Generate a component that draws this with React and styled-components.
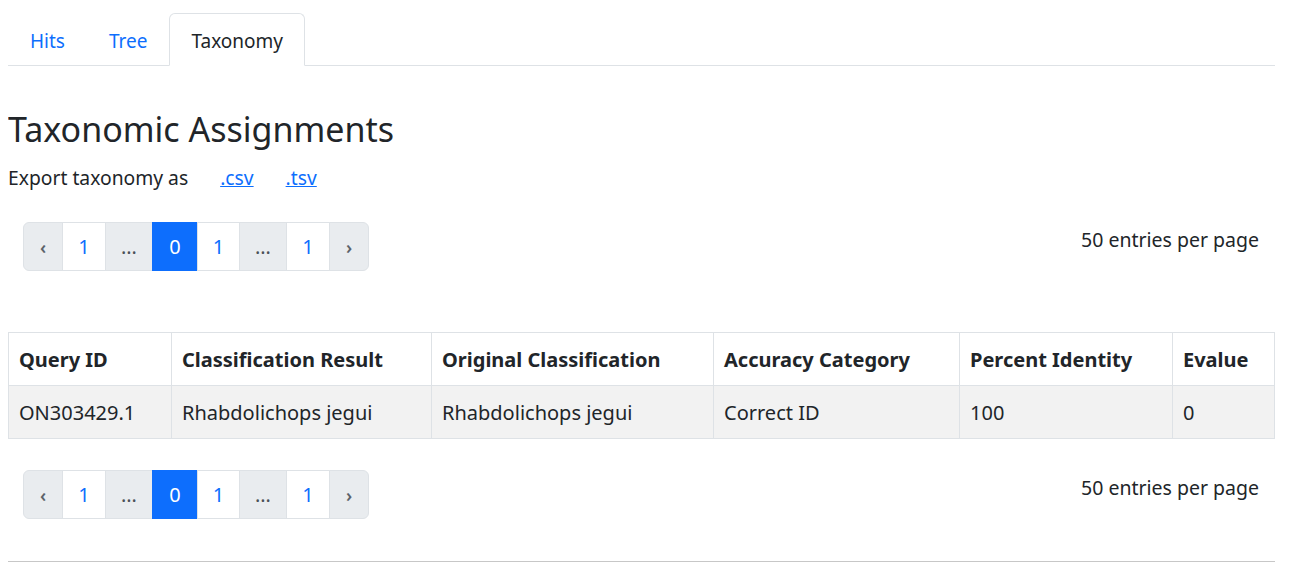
import React from 'react';
import styled, {createGlobalStyle} from 'styled-components';

const GlobalStyle = createGlobalStyle`
  body {
    margin: 8px 25px 8px 8px;
    font-family: "Noto Sans", "Open Sans", sans-serif;
    color: #212529;
    background: #fff;
  }
`;

const Page = styled.div`
  display: flex;
  flex-direction: column;
  padding-top: 5px;
`;

const Tabs = styled.ul`
  display: flex;
  list-style: none;
  margin: 0;
  padding: 0;
  border-bottom: 1px solid #dee2e6;
`;

const Tab = styled.li`
  margin-bottom: -1px;
  padding: 14px 21px 11px;
  font-size: 19px;
  line-height: 26px;
  border: 1px solid ${p => (p.$active ? '#dee2e6' : 'transparent')};
  border-bottom-color: ${p => (p.$active ? '#fff' : 'transparent')};
  border-radius: 6px 6px 0 0;
  background: ${p => (p.$active ? '#fff' : 'transparent')};
  color: ${p => (p.$active ? '#212529' : '#0d6efd')};
  cursor: pointer;
`;

const Heading = styled.h2`
  margin: 42px 0 15px;
  font-size: 34px;
  font-weight: 400;
  line-height: 42px;
`;

const ExportLine = styled.div`
  display: flex;
  align-items: center;
  font-size: 19.3px;
  line-height: 26px;
`;

const ExportLink = styled.a`
  margin-left: 32px;
  color: #0d6efd;
  text-decoration: underline;
`;

const PagerRow = styled.div`
  display: flex;
  align-items: flex-start;
  justify-content: space-between;
  padding: 0 16px 0 15px;
  margin-top: ${p => p.$top}px;
`;

const Pagination = styled.ul`
  display: flex;
  list-style: none;
  margin: 0;
  padding: 0;
`;

const PageItem = styled.li`
  display: flex;
  align-items: center;
  justify-content: center;
  box-sizing: border-box;
  height: 49px;
  width: ${p => p.$w}px;
  margin-left: -1px;
  font-size: ${p => (p.$arrow ? 18 : 20)}px;
  font-weight: ${p => (p.$arrow ? 600 : 400)};
  border: 1px solid ${p => (p.$active ? '#0d6efd' : '#dee2e6')};
  background: ${p => (p.$active ? '#0d6efd' : p.$muted ? '#e9ecef' : '#fff')};
  color: ${p => (p.$active ? '#fff' : p.$arrow ? '#5c636a' : p.$muted ? '#495057' : '#0d6efd')};

  &:first-child {
    margin-left: 0;
    border-radius: 6px 0 0 6px;
  }
  &:last-child {
    border-radius: 0 6px 6px 0;
  }
`;

const PerPage = styled.span`
  margin-top: 4px;
  font-size: 19.5px;
  line-height: 28px;
  color: #212529;
`;

const Table = styled.table`
  margin-top: 61px;
  width: calc(100% - 1px);
  table-layout: fixed;
  border-collapse: collapse;
  font-size: 20px;
`;

const Th = styled.th`
  box-sizing: border-box;
  text-align: left;
  font-weight: 700;
  padding: 12px 10px 10px;
  line-height: 30px;
  border: 1px solid #dee2e6;
  white-space: nowrap;
  width: ${p => p.$w}px;
`;

const Td = styled.td`
  padding: 12px 10px 10px;
  line-height: 30px;
  border: 1px solid #dee2e6;
  background: #f2f2f2;
  white-space: nowrap;
`;

const Rule = styled.hr`
  margin: 42px 0 0;
  border: 0;
  border-top: 1px solid #c7c7c7;
`;

const pages = [
  {label: '‹', arrow: true, muted: true, w: 40},
  {label: '1', w: 44},
  {label: '…', muted: true, w: 48},
  {label: '0', active: true, w: 46},
  {label: '1', w: 43},
  {label: '…', muted: true, w: 48},
  {label: '1', w: 44},
  {label: '›', arrow: true, muted: true, w: 40},
];

function Pager({top}) {
  return (
    <PagerRow $top={top}>
      <Pagination>
        {pages.map((p, i) => (
          <PageItem key={i} $w={p.w} $arrow={p.arrow} $muted={p.muted} $active={p.active}>
            {p.label}
          </PageItem>
        ))}
      </Pagination>
      <PerPage>50 entries per page</PerPage>
    </PagerRow>
  );
}

const columns = [
  ['Query ID', 163],
  ['Classification Result', 260],
  ['Original Classification', 282],
  ['Accuracy Category', 246],
  ['Percent Identity', 213],
  ['Evalue', 102],
];

const row = ['ON303429.1', 'Rhabdolichops jegui', 'Rhabdolichops jegui', 'Correct ID', '100', '0'];

export default function App() {
  return (
    <Page>
      <GlobalStyle />
      <Tabs>
        <Tab>Hits</Tab>
        <Tab>Tree</Tab>
        <Tab $active>Taxonomy</Tab>
      </Tabs>
      <Heading>Taxonomic Assignments</Heading>
      <ExportLine>
        Export taxonomy as
        <ExportLink href="#">.csv</ExportLink>
        <ExportLink href="#">.tsv</ExportLink>
      </ExportLine>
      <Pager top={31} />
      <Table>
        <thead>
          <tr>
            {columns.map(([name, w]) => (
              <Th key={name} $w={w}>
                {name}
              </Th>
            ))}
          </tr>
        </thead>
        <tbody>
          <tr>
            {row.map((v, i) => (
              <Td key={i}>{v}</Td>
            ))}
          </tr>
        </tbody>
      </Table>
      <Pager top={31} />
      <Rule />
    </Page>
  );
}
